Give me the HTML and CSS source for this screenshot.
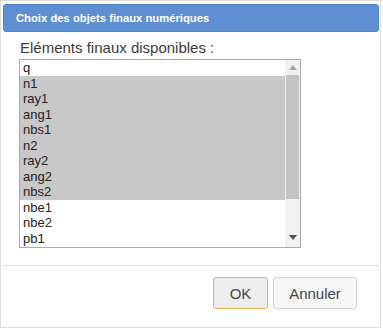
FILE: index.html
```html
<!DOCTYPE html>
<html lang="fr">
<head>
<meta charset="utf-8">
<title>Choix des objets finaux numériques</title>
<link rel="stylesheet" href="styles.css">
</head>
<body>
<div class="dialog">
  <div class="titlebar"><span class="title">Choix des objets finaux numériques</span></div>
  <div class="content">
    <div class="label">Eléments finaux disponibles :</div>
    <div class="listbox">
      <div class="items">
        <div class="item">q</div>
        <div class="item sel">n1</div>
        <div class="item sel">ray1</div>
        <div class="item sel">ang1</div>
        <div class="item sel">nbs1</div>
        <div class="item sel">n2</div>
        <div class="item sel">ray2</div>
        <div class="item sel">ang2</div>
        <div class="item sel">nbs2</div>
        <div class="item">nbe1</div>
        <div class="item">nbe2</div>
        <div class="item">pb1</div>
      </div>
      <div class="scrollbar">
        <div class="arrow up"><svg width="8" height="5" viewBox="0 0 8 5"><polygon points="0,5 8,5 4,0" fill="#a3a3a3"/></svg></div>
        <div class="track"><div class="thumb"></div></div>
        <div class="arrow down"><svg width="8" height="5" viewBox="0 0 8 5"><polygon points="0,0 8,0 4,5" fill="#505050"/></svg></div>
      </div>
    </div>
  </div>
  <div class="buttonpane">
    <button class="btn btn-ok">OK</button>
    <button class="btn btn-cancel">Annuler</button>
  </div>
</div>
</body>
</html>
```
FILE: styles.css
```css
html, body {
  margin: 0;
  padding: 0;
  background: #ffffff;
}
body {
  font-family: "Liberation Sans", Arial, sans-serif;
  color: #333333;
}
.dialog {
  box-sizing: border-box;
  width: 381px;
  height: 328px;
  border: 1px solid #dddddd;
  padding: 3px 1px 0 2px;
  display: flex;
  flex-direction: column;
}
.titlebar {
  box-sizing: border-box;
  height: 28px;
  background: #5e8fd2;
  border: 1px solid #4f82cd;
  border-radius: 3px;
  display: flex;
  align-items: center;
  padding-left: 12px;
}
.title {
  color: #ffffff;
  font-weight: bold;
  font-size: 11.25px;
}
.content {
  padding: 7px 0 0 16px;
  display: flex;
  flex-direction: column;
}
.label {
  font-size: 15px;
  line-height: 17px;
  color: #3a3a3a;
  padding-left: 1px;
  margin-bottom: 3px;
}
.listbox {
  box-sizing: border-box;
  width: 282px;
  height: 189px;
  border: 1px solid #ababab;
  display: flex;
  overflow: hidden;
}
.items {
  flex: 1;
  overflow: hidden;
}
.item {
  height: 15.5px;
  line-height: 15px;
  font-size: 13px;
  color: #222222;
  padding-left: 3px;
  white-space: nowrap;
}
.item.sel {
  background: #c8c8c8;
}
.scrollbar {
  width: 15px;
  background: #f1f1f1;
  display: flex;
  flex-direction: column;
}
.arrow {
  height: 15px;
  display: flex;
  align-items: center;
  justify-content: center;
}
.arrow.down {
  height: 17px;
  align-items: flex-start;
  padding-top: 5px;
  box-sizing: border-box;
}
.track {
  flex: 1;
  padding: 0 1px;
}
.thumb {
  height: 124px;
  background: #c3c3c3;
}
.buttonpane {
  margin-top: 17px;
  border-top: 1px solid #dddddd;
  padding: 11px 22px 0 0;
  display: flex;
  justify-content: flex-end;
  gap: 5px;
}
.btn {
  box-sizing: border-box;
  height: 32px;
  font-family: "Liberation Sans", Arial, sans-serif;
  font-size: 15px;
  color: #454545;
  background: #f6f6f6;
  border: 1px solid #d3d3d3;
  border-radius: 3px;
  padding: 0;
  margin: 0;
}
.btn-ok {
  background: #ededed;
  border-color: #e8b14f;
  width: 55px;
}
.btn-cancel {
  width: 84px;
}
```
